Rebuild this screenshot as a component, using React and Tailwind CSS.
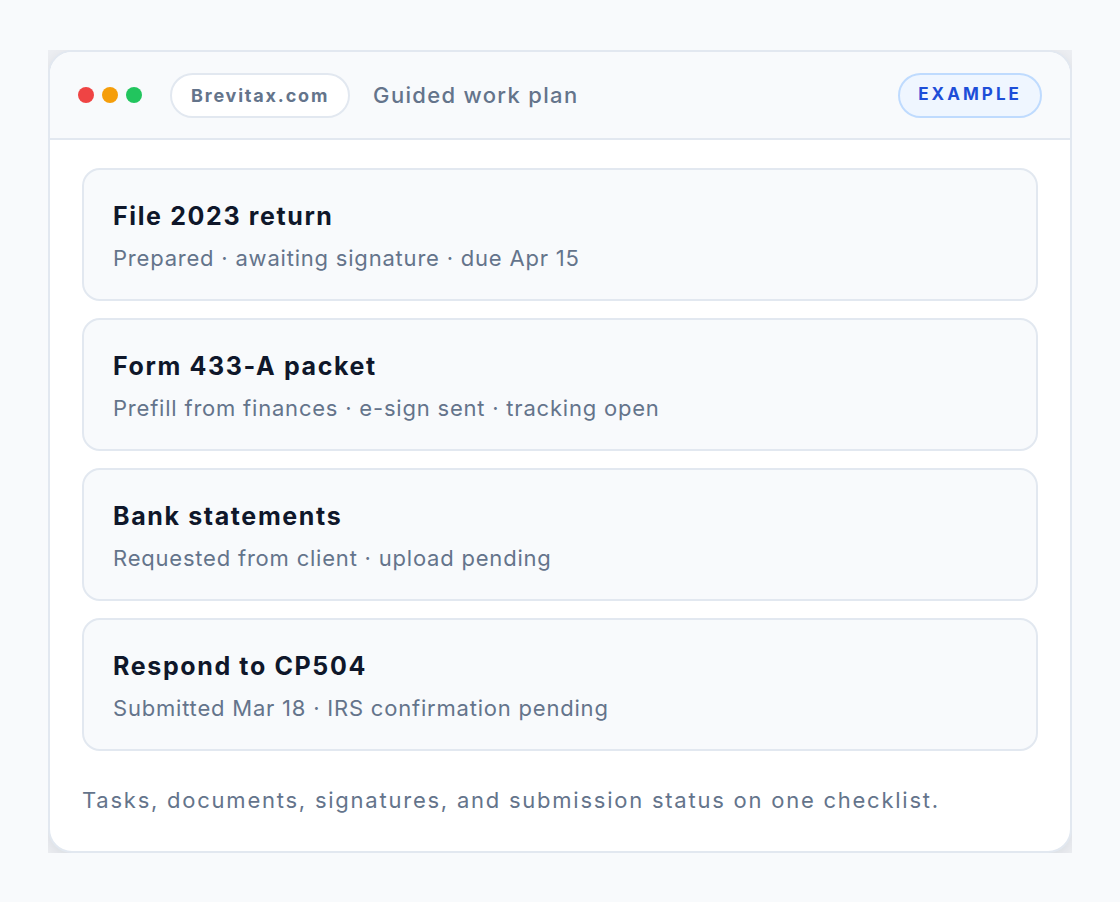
const TASKS = [
  { title: 'File 2023 return', meta: 'Prepared · awaiting signature · due Apr 15' },
  { title: 'Form 433-A packet', meta: 'Prefill from finances · e-sign sent · tracking open' },
  { title: 'Bank statements', meta: 'Requested from client · upload pending' },
  { title: 'Respond to CP504', meta: 'Submitted Mar 18 · IRS confirmation pending' },
]

export default function App() {
  return (
    <div className="min-h-[902px] bg-[#f8fafc] pt-[50px] px-[48px]" style={{ fontFamily: 'Inter, "Noto Sans", sans-serif' }}>
      <div className="bg-[#eceef2] overflow-hidden">
        <div className="bg-white rounded-[24px] border-2 border-[#e2e8f0] overflow-hidden shadow-[0_4px_14px_rgba(15,23,42,0.08)]">
          {/* window bar */}
          <div className="h-[88px] bg-[#f8fafc] border-b-2 border-[#e2e8f0] flex items-center pl-[28px] pr-[28px]">
            <div className="flex items-center gap-2">
              <span className="w-4 h-4 rounded-full bg-[#ef4444]" />
              <span className="w-4 h-4 rounded-full bg-[#f59e0b]" />
              <span className="w-4 h-4 rounded-full bg-[#22c55e]" />
            </div>
            <div className="ml-[28px] h-[45px] px-[19px] flex items-center rounded-full bg-white border-2 border-[#e2e8f0] text-[18px] font-bold tracking-[0.1em] text-[#64748b]">
              Brevitax.com
            </div>
            <div className="ml-[23px] text-[22px] font-medium tracking-[0.06em] text-[#64748b]">Guided work plan</div>
            <div className="ml-auto h-[45px] px-[18px] flex items-center rounded-full bg-[#eff6ff] border-2 border-[#bfdbfe] text-[17px] font-bold tracking-[0.18em] text-[#1d4ed8]">
              EXAMPLE
            </div>
          </div>

          {/* checklist */}
          <div className="px-[32px] pt-[28px] pb-[36px]">
            <div className="flex flex-col gap-[17px]">
              {TASKS.map(t => (
                <div key={t.title} className="h-[133px] rounded-[18px] border-2 border-[#e2e8f0] bg-[#f8fafc] pl-[29px] pt-[30px]">
                  <div className="text-[25px] leading-[32px] font-bold tracking-[0.065em] text-[#0f172a]">{t.title}</div>
                  <div className="mt-[12px] text-[22px] leading-[28px] tracking-[0.036em] text-[#64748b]">{t.meta}</div>
                </div>
              ))}
            </div>
            <p className="mt-[34px] text-[22px] leading-[30px] tracking-[0.08em] text-[#64748b]">
              Tasks, documents, signatures, and submission status on one checklist.
            </p>
          </div>
        </div>
      </div>
    </div>
  )
}
